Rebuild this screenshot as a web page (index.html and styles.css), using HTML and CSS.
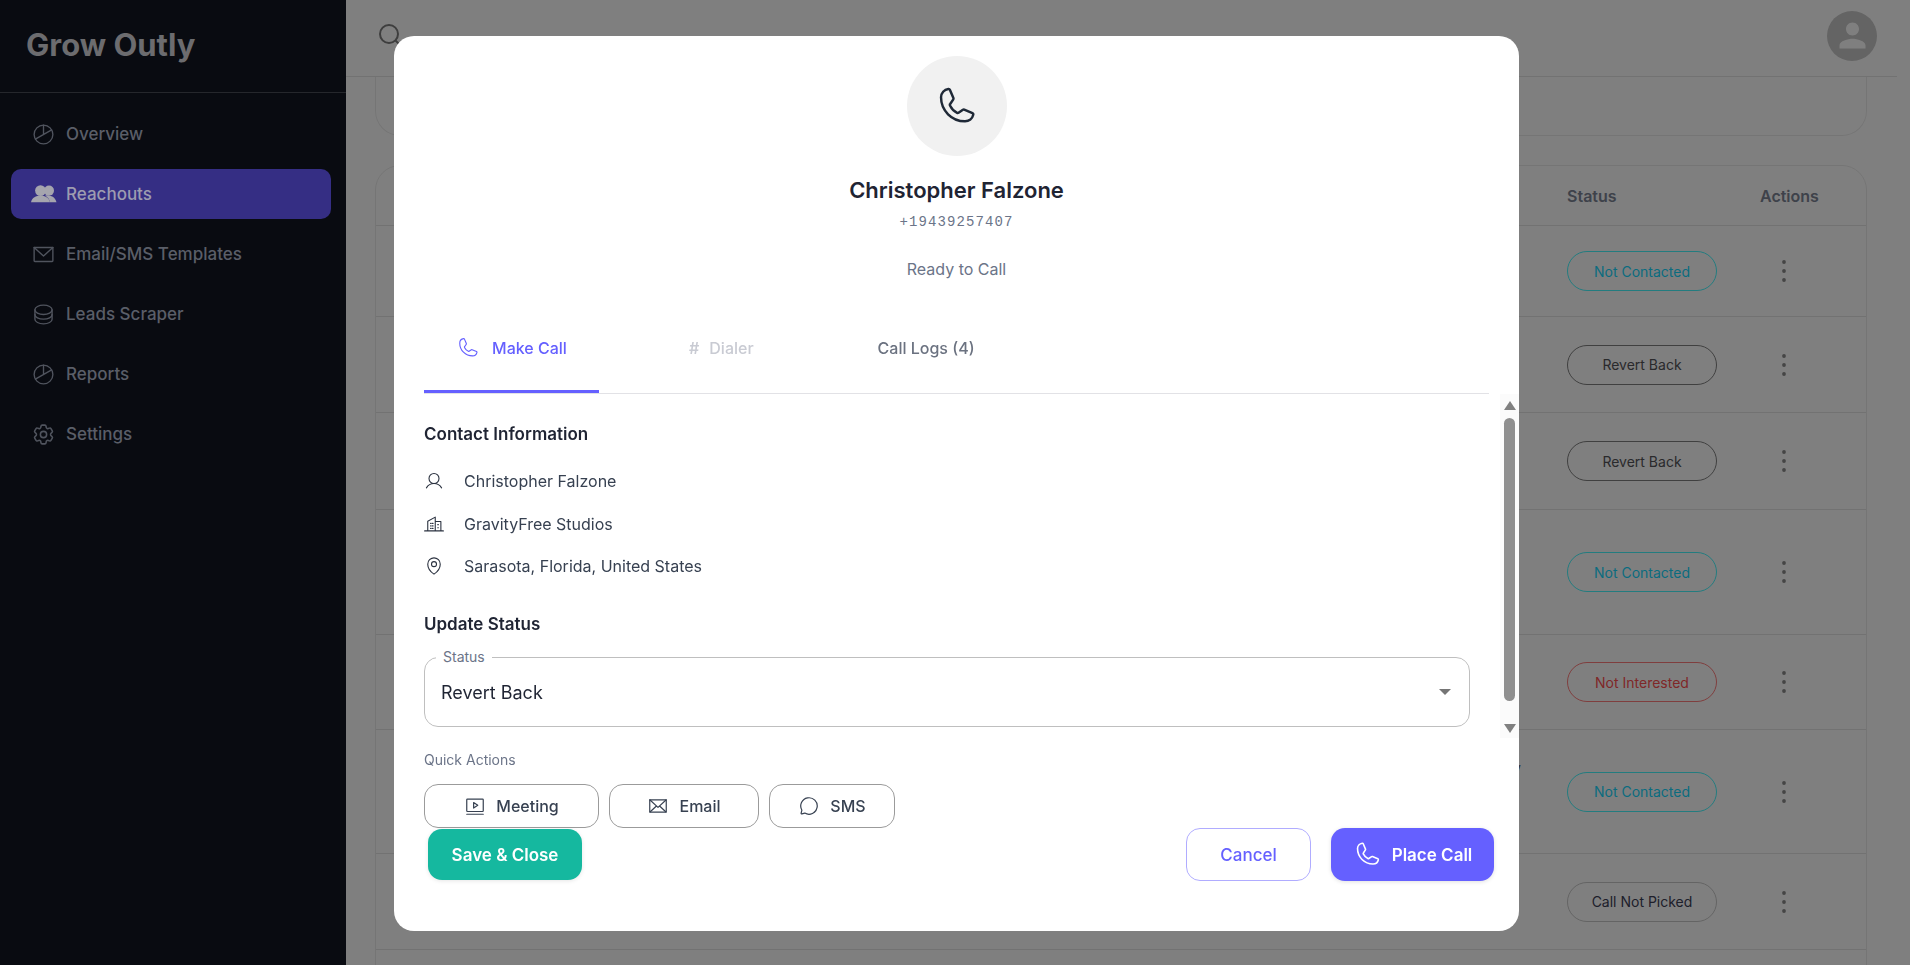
FILE: index.html
```html
<!DOCTYPE html>
<html lang="en">
<head>
<meta charset="utf-8">
<title>Grow Outly</title>
<link rel="stylesheet" href="styles.css">
</head>
<body>
<svg class="defs" aria-hidden="true">
  <symbol id="i-phone" viewBox="0 0 256 256"><path d="M92.5,124.8a83.6,83.6,0,0,0,39,38.9,8.2,8.2,0,0,0,8-.6l25-16.7a8,8,0,0,1,7.6-.7l46.8,20.1a7.9,7.9,0,0,1,4.8,8.3A48,48,0,0,1,176,212,136,136,0,0,1,40,76,48,48,0,0,1,81.9,28.4a7.9,7.9,0,0,1,8.3,4.8l20.1,46.9a8,8,0,0,1-.6,7.5L93,112.6A8,8,0,0,0,92.5,124.8Z"/></symbol>
  <symbol id="i-pie" viewBox="0 0 256 256"><circle cx="128" cy="128" r="96"/><path d="M128,128V32M211.1,80,44.9,176"/></symbol>
  <symbol id="i-mail-simple" viewBox="0 0 256 256"><path d="M32,56H224V192a8,8,0,0,1-8,8H40a8,8,0,0,1-8-8Z"/><path d="M224,56l-96,88L32,56"/></symbol>
  <symbol id="i-mail" viewBox="0 0 256 256"><path d="M32,56H224V192a8,8,0,0,1-8,8H40a8,8,0,0,1-8-8Z"/><path d="M224,56l-96,88L32,56M110,128,34.5,197.7M221.5,197.7,146,128"/></symbol>
  <symbol id="i-db" viewBox="0 0 256 256"><ellipse cx="128" cy="80" rx="88" ry="48"/><path d="M40,80v48c0,26.5,39.4,48,88,48s88-21.5,88-48V80"/><path d="M40,128v48c0,26.5,39.4,48,88,48s88-21.5,88-48V128"/></symbol>
  <symbol id="i-gear" viewBox="0 0 24 24"><path d="M9.594 3.94c.09-.542.56-.94 1.11-.94h2.593c.55 0 1.02.398 1.11.94l.213 1.281c.063.374.313.686.645.87.074.04.147.083.22.127.325.196.72.257 1.075.124l1.217-.456a1.125 1.125 0 0 1 1.37.49l1.296 2.247a1.125 1.125 0 0 1-.26 1.431l-1.003.827c-.293.241-.438.613-.43.992a7.723 7.723 0 0 1 0 .255c-.008.378.137.75.43.991l1.004.827c.424.35.534.955.26 1.43l-1.298 2.247a1.125 1.125 0 0 1-1.369.491l-1.217-.456c-.355-.133-.75-.072-1.076.124a6.47 6.47 0 0 1-.22.128c-.331.183-.581.495-.644.869l-.213 1.281c-.09.543-.56.94-1.11.94h-2.594c-.55 0-1.019-.398-1.11-.94l-.213-1.281c-.062-.374-.312-.686-.644-.87a6.52 6.52 0 0 1-.22-.127c-.325-.196-.72-.257-1.076-.124l-1.217.456a1.125 1.125 0 0 1-1.369-.49l-1.297-2.247a1.125 1.125 0 0 1 .26-1.431l1.004-.827c.292-.24.437-.613.43-.991a6.932 6.932 0 0 1 0-.255c.007-.38-.138-.751-.43-.992l-1.004-.827a1.125 1.125 0 0 1-.26-1.43l1.297-2.247a1.125 1.125 0 0 1 1.37-.491l1.216.456c.356.133.751.072 1.076-.124.072-.044.146-.086.22-.128.332-.183.582-.495.644-.869l.214-1.28Z"/><circle cx="12" cy="12" r="3"/></symbol>
  <symbol id="i-user" viewBox="0 0 256 256"><circle cx="128" cy="96" r="64"/><path d="M31,216c19.5-33.5,55.4-56,97-56s77.5,22.5,97,56"/></symbol>
  <symbol id="i-buildings" viewBox="0 0 256 256"><path d="M8,216H248M144,216V40L48,92V216M144,96h72V216"/><path d="M84,120h8M108,120h8M84,152h8M108,152h8M84,184h8M108,184h8M176,136h8M176,176h8"/></symbol>
  <symbol id="i-pin" viewBox="0 0 256 256"><circle cx="128" cy="104" r="32"/><path d="M208,104c0,72-80,128-80,128S48,176,48,104a80,80,0,0,1,160,0Z"/></symbol>
  <symbol id="i-monitor" viewBox="0 0 256 256"><rect x="32" y="48" width="192" height="144" rx="8"/><path d="M32,224H224M160,120l-48-32v64Z"/></symbol>
  <symbol id="i-chat" viewBox="0 0 256 256"><path d="M45.4,177A95.9,95.9,0,1,1,79,210.6L45.8,219.9a7.9,7.9,0,0,1-9.7-9.7Z"/></symbol>
  <symbol id="i-dots" viewBox="0 0 16 32"><circle cx="8" cy="7" r="1.9"/><circle cx="8" cy="16" r="1.9"/><circle cx="8" cy="25" r="1.9"/></symbol>
</svg>

<div class="app">
  <aside class="sidebar">
    <div class="brand">Grow Outly</div>
    <nav class="nav">
      <a class="nav-item"><svg class="ic nav-ic"><use href="#i-pie"/></svg>Overview</a>
      <a class="nav-item nav-item--active">
        <svg class="nav-ic-users" viewBox="0 0 26 18"><circle cx="18" cy="5.6" r="5"/><path d="M14 10.5c4-1 10 .5 11.5 6.7H19c-.5-2.700-2-5-5-6.700Z"/><circle cx="9.500" cy="5.600" r="5.400"/><path d="M0 17.200C1 12.500 5 10.800 9.500 10.800s8.500 1.700 9.500 6.400Z"/></svg>
        Reachouts</a>
      <a class="nav-item"><svg class="ic nav-ic"><use href="#i-mail-simple"/></svg>Email/SMS Templates</a>
      <a class="nav-item"><svg class="ic nav-ic"><use href="#i-db"/></svg>Leads Scraper</a>
      <a class="nav-item"><svg class="ic nav-ic"><use href="#i-pie"/></svg>Reports</a>
      <a class="nav-item"><svg class="ic nav-ic ic--gear"><use href="#i-gear"/></svg>Settings</a>
    </nav>
  </aside>

  <main class="main">
    <header class="topbar">
      <svg class="search" viewBox="0 0 26 26"><circle cx="10" cy="10" r="9"/><path d="M16.500 16.500 23 23"/></svg>
      <div class="account"><svg viewBox="0 0 24 24"><path d="M12 12c2.210 0 4-1.790 4-4s-1.790-4-4-4-4 1.790-4 4 1.790 4 4 4zm0 2c-2.670 0-8 1.340-8 4v2h16v-2c0-2.660-5.330-4-8-4z"/></svg></div>
    </header>
    <div class="content">
      <section class="card card--filters"></section>
      <section class="card card--table">
        <div class="row row--head"><span></span><span>Status</span><span>Actions</span></div>
        <div class="row row--r1"><span></span><span class="pill pill--teal">Not Contacted</span><svg class="dots"><use href="#i-dots"/></svg></div>
        <div class="row row--r2"><span></span><span class="pill pill--dark">Revert Back</span><svg class="dots"><use href="#i-dots"/></svg></div>
        <div class="row row--r3"><span></span><span class="pill pill--dark">Revert Back</span><svg class="dots"><use href="#i-dots"/></svg></div>
        <div class="row row--r4"><span></span><span class="pill pill--teal">Not Contacted</span><svg class="dots"><use href="#i-dots"/></svg></div>
        <div class="row row--r5"><span></span><span class="pill pill--red">Not Interested</span><svg class="dots"><use href="#i-dots"/></svg></div>
        <div class="row row--r6"><span class="lead-tail">y</span><span class="pill pill--teal">Not Contacted</span><svg class="dots"><use href="#i-dots"/></svg></div>
        <div class="row row--r7"><span></span><span class="pill pill--grey">Call Not Picked</span><svg class="dots"><use href="#i-dots"/></svg></div>
        <div class="row row--r8"></div>
      </section>
    </div>
    <div class="scrim"></div>
  </main>
</div>

<div class="modal">
  <div class="modal-head">
    <div class="call-avatar"><svg class="ic ic--avatar"><use href="#i-phone"/></svg></div>
    <h2 class="call-name">Christopher Falzone</h2>
    <div class="call-phone">+19439257407</div>
    <div class="call-state">Ready to Call</div>
  </div>
  <div class="tabs">
    <div class="tab tab--active"><svg class="ic ic--tab"><use href="#i-phone"/></svg>Make Call</div>
    <div class="tab tab--disabled"><span class="hash">#</span>Dialer</div>
    <div class="tab">Call Logs (4)</div>
  </div>
  <div class="modal-body">
    <div class="body-main">
      <h3 class="section-title">Contact Information</h3>
      <ul class="info-list">
        <li class="info-row"><svg class="ic ic--info"><use href="#i-user"/></svg>Christopher Falzone</li>
        <li class="info-row"><svg class="ic ic--info ic--thin"><use href="#i-buildings"/></svg>GravityFree Studios</li>
        <li class="info-row"><svg class="ic ic--info"><use href="#i-pin"/></svg>Sarasota, Florida, United States</li>
      </ul>
      <h3 class="section-title section-title--status">Update Status</h3>
      <div class="select">
        <span class="select-label">Status</span>
        <span class="select-value">Revert Back</span>
        <span class="select-caret"></span>
      </div>
      <div class="quick-label">Quick Actions</div>
      <div class="quick-actions">
        <button class="quick-btn quick-btn--meeting"><svg class="ic ic--btn"><use href="#i-monitor"/></svg>Meeting</button>
        <button class="quick-btn quick-btn--email"><svg class="ic ic--btn"><use href="#i-mail"/></svg>Email</button>
        <button class="quick-btn quick-btn--sms"><svg class="ic ic--btn"><use href="#i-chat"/></svg>SMS</button>
      </div>
    </div>
    <div class="scrollbar">
      <span class="sb-arrow sb-arrow--up"></span>
      <span class="sb-thumb"></span>
      <span class="sb-arrow sb-arrow--down"></span>
    </div>
  </div>
  <div class="modal-foot">
    <button class="btn btn--save">Save &amp; Close</button>
    <div class="foot-right">
      <button class="btn btn--cancel">Cancel</button>
      <button class="btn btn--call"><svg class="ic ic--call"><use href="#i-phone"/></svg>Place Call</button>
    </div>
  </div>
</div>
</body>
</html>
```

FILE: styles.css
```css
* { box-sizing: border-box; }
html, body { margin: 0; height: 100%; overflow: hidden; }
body { font-family: Inter, "Liberation Sans", sans-serif; background: #fff; color: #1f2937; }
.defs { position: absolute; width: 0; height: 0; }
h2, h3, ul { margin: 0; padding: 0; }
ul { list-style: none; }
button { font-family: inherit; cursor: pointer; }

.ic { fill: none; stroke: currentColor; stroke-width: 16; stroke-linecap: round; stroke-linejoin: round; }
.ic use { stroke-width: 14; }

.app { display: flex; height: 965px; }

/* Sidebar */
.sidebar { width: 346px; flex: none; background: #090b11; }
.brand { height: 93px; padding: 26px 0 0 26px; border-bottom: 1px solid #25272c; color: #6c6c6f; font-size: 31px; font-weight: 700; line-height: 38px; }
.nav { display: flex; flex-direction: column; gap: 10px; padding: 16px 15px 0 11px; }
.nav-item { display: flex; align-items: center; gap: 10px; height: 50px; padding-left: 20px; border-radius: 10px; color: #5a5e68; font-size: 17px; font-weight: 500; }
.nav-item--active { background: #352e84; color: #9d9cb0; gap: 9px; padding-left: 20px; }
.nav-ic { width: 25px; height: 25px; color: #50545e; }
.nav-ic-users { width: 26px; height: 18px; fill: #a5a5ae; }
.ic--gear use { stroke-width: 1.5; }
.ic--gear { stroke-width: 1.5; }

/* Main page behind the dialog */
.main { position: relative; flex: 1; min-width: 0; display: flex; flex-direction: column; padding-right: 13px; background: #fff; }
.topbar { height: 77px; flex: none; display: flex; align-items: center; justify-content: space-between; padding: 0 20px 1px 33px; border-bottom: 1px solid #e4e4e4; }
.search { width: 26px; height: 26px; fill: none; stroke: #7c7c7c; stroke-width: 2; align-self: flex-start; margin-top: 24px; }
.account { width: 50px; height: 50px; border-radius: 50%; background: #c8c8c8; display: flex; align-items: center; justify-content: center; margin-top: -4px; }
.account svg { width: 39px; height: 39px; fill: #fff; }
.content { flex: 1; min-height: 0; overflow: hidden; display: flex; flex-direction: column; gap: 29px; padding: 0 30px 0 29px; }
.card { border: 1px solid #ebebeb; background: #fff; }
.card--filters { height: 59px; flex: none; border-top: 0; border-radius: 0 0 25px 25px; }
.card--table { flex: none; height: 900px; border-radius: 25px 25px 0 0; }
.row { display: grid; grid-template-columns: 1fr 193px 106px; align-items: center; border-top: 1px solid #e4e4e4; }
.row--head { height: 59px; border-top: 0; color: #7c8495; font-size: 16px; font-weight: 600; }
.row--r1 { height: 91px; }
.row--r2 { height: 96px; }
.row--r3 { height: 97px; }
.row--r4 { height: 125px; }
.row--r5 { height: 95px; }
.row--r6 { height: 124px; }
.row--r7 { height: 96px; }
.row--r8 { height: 90px; }
.lead-tail { justify-self: end; align-self: start; margin: 30px 46px 0 0; color: #5a6070; font-size: 15px; line-height: 18px; }
.pill { display: flex; align-items: center; justify-content: center; width: 150px; height: 40px; border: 1px solid; border-radius: 20px; font-size: 14px; }
.pill--teal { color: #16d8ff; border-color: #46f8ff; }
.pill--dark { color: #545458; border-color: #808080; }
.pill--red { color: #ff5050; border-color: #ff7c7c; }
.pill--grey { color: #3c4056; border-color: #c8c8c8; }
.dots { width: 16px; height: 32px; margin-left: 16px; fill: #8a8a8a; }
.scrim { position: absolute; inset: 0 0 0 0; background: rgba(0, 0, 0, .5); }

/* Dialog */
.modal { position: fixed; left: 394px; top: 36px; width: 1125px; height: 895px; display: flex; flex-direction: column; background: #fff; border-radius: 20px; overflow: hidden; }
.modal-head { display: flex; flex-direction: column; align-items: center; height: 267px; padding-top: 20px; }
.call-avatar { width: 100px; height: 100px; border-radius: 50%; background: #f1f1f1; display: flex; align-items: center; justify-content: center; color: #1f2937; }
.ic--avatar { width: 45px; height: 45px; }
.call-name { margin-top: 19px; font-size: 22px; line-height: 30px; font-weight: 600; color: #1f2433; }
.call-phone { margin-top: 7px; font-family: "Liberation Mono", monospace; font-size: 14px; line-height: 20px; letter-spacing: 1.1px; color: #6b7488; }
.call-state { margin-top: 25px; font-size: 16px; line-height: 24px; color: #6b7488; }

.tabs { display: flex; height: 91px; margin: 0 30px; border-bottom: 1px solid #e2e2e6; flex: none; }
.tab { display: flex; align-items: center; justify-content: center; height: 90px; padding: 0 32px; font-size: 16px; font-weight: 500; color: #6b7280; margin-right: 60px; }
.tab--active { width: 175px; color: #6560ff; border-bottom: 3px solid #6560ff; padding: 3px 0 0; margin-right: 58px; gap: 12px; }
.tab--disabled { color: #c9cbd3; gap: 10px; }
.hash { font-weight: 600; }
.ic--tab { width: 24px; height: 24px; }
.ic--tab use { stroke-width: 12; }

.modal-body { flex: none; height: 434px; display: flex; align-items: flex-start; }
.body-main { flex: 1; min-width: 0; padding: 28px 30px 0; }
.section-title { font-size: 17px; line-height: 24px; font-weight: 600; color: #1f2433; }
.info-list { display: flex; flex-direction: column; gap: 18.500px; margin-top: 23px; }
.info-row { display: flex; align-items: center; gap: 20px; height: 24px; font-size: 16px; color: #374151; }
.ic--info { width: 20px; height: 20px; color: #2b3240; }
.section-title--status { margin-top: 34px; }
.select { position: relative; display: flex; align-items: center; height: 70px; margin-top: 21px; padding: 0 18px 0 16px; border: 1px solid #bfbfbf; border-radius: 14px; }
.select-label { position: absolute; left: 11px; top: -10px; padding: 0 7px; background: #fff; font-size: 14px; line-height: 18px; color: #6b7488; }
.select-value { flex: 1; font-size: 18px; color: #1f2433; }
.select-caret { width: 0; height: 0; border: 6px solid transparent; border-top: 6px solid #757575; border-bottom: 0; }
.quick-label { margin-top: 24px; font-size: 14px; line-height: 18px; color: #6b7488; }
.quick-actions { display: flex; gap: 10px; margin-top: 15px; }
.quick-btn { display: flex; align-items: center; justify-content: center; gap: 10px; height: 44px; border: 1px solid #9b9b9b; border-radius: 14px; background: #fff; color: #374151; font-size: 16px; font-weight: 500; padding: 0; }
.quick-btn--meeting { width: 175px; }
.quick-btn--email { width: 150px; }
.quick-btn--sms { width: 126px; }
.ic--btn { width: 22px; height: 22px; }

.scrollbar { position: relative; flex: none; width: 19px; height: 344px; display: flex; flex-direction: column; align-items: center; background: #fbfbfb; padding-left: 0; }
.sb-thumb { width: 11px; height: 283px; margin-top: 8px; border-radius: 6px; background: #8f8f8f; }
.sb-arrow { width: 0; height: 0; border-left: 6.500px solid transparent; border-right: 6.500px solid transparent; }
.sb-arrow--up { margin-top: 7px; border-bottom: 9px solid #808080; }
.sb-arrow--down { margin-top: 23px; border-top: 9px solid #808080; }

.modal-foot { display: flex; align-items: center; justify-content: space-between; flex: none; height: 53px; padding: 0 25px 0 34px; }
.foot-right { display: flex; gap: 20px; }
.btn { display: flex; align-items: center; justify-content: center; border-radius: 14px; font-size: 17px; border: 0; padding: 0; }
.btn--save { width: 154px; height: 51px; background: #15b89f; color: #fff; font-weight: 600; box-shadow: 0 1px 4px rgba(0,0,0,.1); }
.btn--cancel { width: 125px; height: 53px; background: #fff; border: 1px solid #b0acff; color: #6560ff; font-weight: 500; }
.btn--call { width: 163px; height: 53px; gap: 10px; background: #6560ff; color: #fff; font-weight: 600; box-shadow: 0 1px 4px rgba(0,0,0,.12); }
.ic--call { width: 29px; height: 29px; }
```
